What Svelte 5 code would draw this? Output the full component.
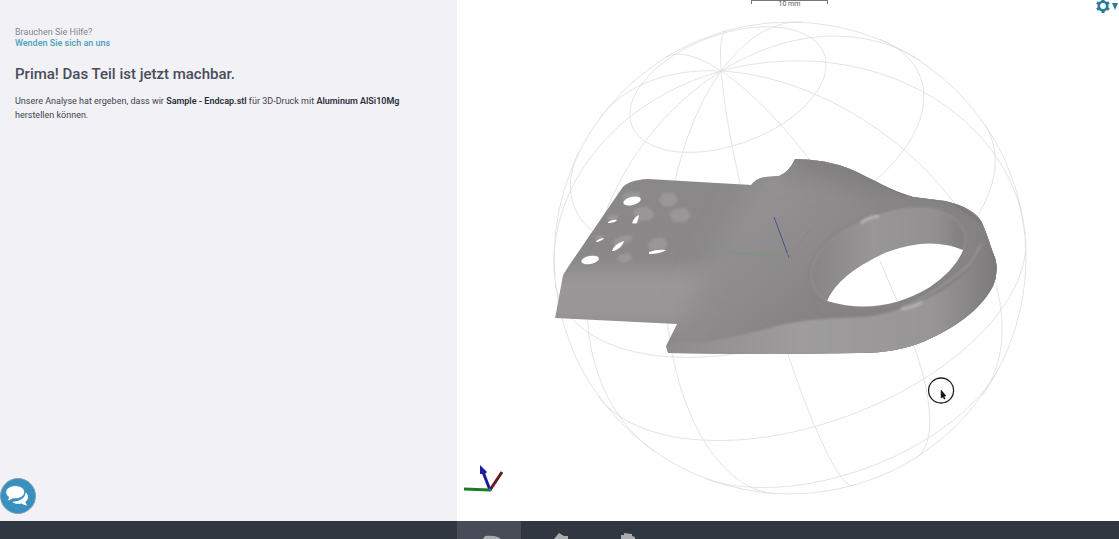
<script lang="ts">
	type Point = { x: number; y: number; z: number };

	// Bounding sphere of the orbit control, in scene units
	const center = { x: 790, y: 258 };
	const radius = 236;
	const rings = 7;
	const segments = 12;
	const twist = 98.7;

	// Pole axis and the two vectors that span the equator
	const axis = { x: -0.292, y: -0.792, z: 0.537 };
	const u = { x: 0.94, y: -0.347, z: 0 };
	const v = { x: 0.186, y: 0.505, z: 0.843 };

	const rad = (deg: number) => (deg * Math.PI) / 180;

	function project(theta: number, phi: number): Point {
		const c = Math.cos(theta);
		const s = Math.sin(theta);
		const a = s * Math.cos(phi);
		const b = s * Math.sin(phi);
		return {
			x: center.x + radius * (c * axis.x + a * u.x + b * v.x),
			y: center.y + radius * (c * axis.y + a * u.y + b * v.y),
			z: c * axis.z + a * u.z + b * v.z
		};
	}

	// Only the side that faces the camera is drawn
	function toPath(points: Point[]): string {
		let d = '';
		let pen = false;
		for (const p of points) {
			if (p.z < 0) {
				pen = false;
				continue;
			}
			d += `${pen ? 'L' : 'M'}${p.x.toFixed(1)} ${p.y.toFixed(1)}`;
			pen = true;
		}
		return d;
	}

	const steps = Array.from({ length: 121 }, (_, i) => i / 120);

	const parallels = Array.from({ length: rings - 1 }, (_, i) =>
		toPath(steps.map((t) => project(rad(((i + 1) * 180) / rings), rad(t * 360))))
	);
	const meridians = Array.from({ length: segments }, (_, i) =>
		toPath(steps.map((t) => project(rad(t * 180), rad(twist + (i * 360) / segments))))
	);

	const thumbs = [
		{ label: 'Ansicht 1', d: 'M26 18 L28 15 Q35 14 41 16 L44 18 Z' },
		{ label: 'Ansicht 2', d: 'M29 18 L34 12 L39 15 L43 15 V18 H29 Z' },
		{ label: 'Ansicht 3', d: 'M28 18 V14 L31 14 L31 12 L39 13 L39 15 L42 16 V18 H28 Z' }
	];
	let selected = $state(0);
</script>

<div class="page">
	<main>
		<section class="info">
			<p class="help">
				Brauchen Sie Hilfe?<br />
				<a href="#kontakt">Wenden Sie sich an uns</a>
			</p>
			<h1>Prima! Das Teil ist jetzt machbar.</h1>
			<p class="result">
				Unsere Analyse hat ergeben, dass wir <strong>Sample - Endcap.stl</strong> für 3D-Druck mit
				<strong>Aluminum AlSi10Mg</strong><br />herstellen können.
			</p>
			<button class="chat" aria-label="Chat">
				<svg viewBox="0 0 36 36">
					<path
						d="M26 14 C30 17 29 22 26 24 C26 26 27 27 28 28 C25 28 23 27 22 26 C18 27 14 26 12 24 C20 24 26 20 26 14 Z"
						fill="#fff"
					/>
					<path
						d="M15 7 C21 7 25 10 25 14 C25 18 20 21 15 21 L12 21 C10 23 8 23 6 23 C7 22 8 21 8 19 C6 18 5 16 5 14 C5 10 10 7 15 7 Z"
						fill="#fff"
						stroke="#398fbd"
					/>
				</svg>
			</button>
		</section>

		<section class="viewer">
			<svg class="scene" viewBox="457 0 662 521">
				<defs>
					<linearGradient id="plate" x1="0" y1="180" x2="0" y2="354" gradientUnits="userSpaceOnUse">
						<stop offset="0" stop-color="#8a8888" />
						<stop offset="0.44" stop-color="#898787" />
						<stop offset="0.6" stop-color="#9a9898" />
						<stop offset="0.75" stop-color="#989696" />
						<stop offset="1" stop-color="#858383" />
					</linearGradient>
					<linearGradient id="hub" x1="730" y1="220" x2="815" y2="320" gradientUnits="userSpaceOnUse">
						<stop offset="0" stop-color="#939191" />
						<stop offset="0.5" stop-color="#8d8b8b" />
						<stop offset="1" stop-color="#838181" />
					</linearGradient>
					<linearGradient id="side" x1="670" y1="0" x2="996" y2="0" gradientUnits="userSpaceOnUse">
						<stop offset="0" stop-color="#8e8c8c" />
						<stop offset="0.4" stop-color="#9e9c9c" />
						<stop offset="0.8" stop-color="#989696" />
						<stop offset="1" stop-color="#7c7a7a" />
					</linearGradient>
					<linearGradient id="bore" x1="811" y1="0" x2="967" y2="0" gradientUnits="userSpaceOnUse">
						<stop offset="0" stop-color="#868484" />
						<stop offset="0.4" stop-color="#989696" />
						<stop offset="0.8" stop-color="#929090" />
						<stop offset="1" stop-color="#7d7b7b" />
					</linearGradient>
					<filter id="soft" x="-20%" y="-20%" width="140%" height="140%">
						<feGaussianBlur stdDeviation="12" />
					</filter>
					<filter id="edge" x="-20%" y="-20%" width="140%" height="140%">
						<feGaussianBlur stdDeviation="1" />
					</filter>
					<clipPath id="outline">
						<path
							d="M555 318 L563 275 L568 267 L622 188 Q628 180 648 179 L751 185 Q756 178 765 177 L779 176 Q789 172 795 159 Q825 159 850 169 C874 180 892 191 913 197 L945 201 Q972 207 981 221 C986 230 990 246 995 258 Q999 272 993 286 C980 311 954 328 925 341 Q897 353 860 353 L773 354 L668 353 L666 346 L677 324 Z"
						/>
					</clipPath>
				</defs>

				<g class="grid">
					<circle cx={center.x} cy={center.y} r={radius} />
					{#each parallels as d}
						<path {d} />
					{/each}
					{#each meridians as d}
						<path {d} />
					{/each}
				</g>

				<g clip-path="url(#outline)">
					<path d="M540 150 H1010 V370 H540 Z" fill="url(#plate)" />
					<path
						d="M760 172 L800 140 L1030 190 V390 H820 L670 370 Q690 290 712 252 Z"
						fill="url(#hub)"
						filter="url(#soft)"
					/>
					<path
						d="M780 170 Q850 185 880 200 L930 196 L850 145 L795 140 Z"
						fill="#827f80"
						filter="url(#soft)"
					/>
					<path
						d="M850 168 L905 195 L950 200 L985 225 L998 270"
						class="shade"
						filter="url(#edge)"
					/>
					<path
						d="M810 285 Q800 262 834 235 Q872 207 925 203 Q962 206 977 228 Q978 262 940 288 Q890 318 820 312 Z"
						fill="#858383"
						filter="url(#edge)"
					/>
					<path
						d="M668 343 L700 342 Q725 340 780 325 Q810 318 867 317 Q908 310 943 290 Q976 269 988 238 L1005 238 V360 H660 Z"
						fill="url(#side)"
						filter="url(#edge)"
					/>
					<path d="M903 307 Q943 290 971 262 L981 244" class="rim" filter="url(#edge)" />
					<path
						d="M827 301 Q806 290 813 263 Q821 242 850 227 Q896 203 933 209 Q973 220 963 250 Z"
						fill="url(#bore)"
						stroke="#999797"
						filter="url(#edge)"
					/>
					<path d="M861 223 Q868 217 879 216" class="glint" filter="url(#edge)" />
					<path d="M901 309 Q914 307 922 302" class="glint" filter="url(#edge)" />
				</g>

				<path
					d="M827 301 Q838 274 887 252 Q930 236 963 250 Q956 269 930 287 Q880 317 827 301 Z"
					fill="#fff"
				/>
				<path d="M880 261 L897 301" class="through" />

				<g class="holes" filter="url(#edge)">
					<path d="M659 200 L663 193 L674 193 L678 201 L671 207 L662 206 Z" />
					<path d="M633 212 Q637 206 648 207 L655 214 L650 220 L638 221 Z" />
					<path d="M669 214 Q674 207 686 208 L691 216 L685 222 L673 222 Z" />
					<path d="M622 195 Q628 190 640 193 L640 199 L624 201 Z" />
					<path d="M607 217 Q612 212 618 216 L617 221 L609 221 Z" />
					<path d="M595 238 Q598 232 604 236 L603 240 L596 240 Z" />
					<path d="M613 242 Q619 234 632 236 L632 240 L615 248 Z" />
					<path d="M648 244 Q652 237 663 238 L668 243 L665 250 L649 250 Z" />
					<path d="M616 260 Q620 252 631 254 L632 259 L624 263 Z" />
					<path d="M582 260 Q588 252 599 256 L598 262 Z" />
				</g>
				<g fill="#fff">
					<ellipse cx="632" cy="201" rx="9" ry="4" transform="rotate(-14 632 201)" />
					<ellipse cx="590" cy="260" rx="9" ry="4" transform="rotate(-12 590 260)" />
					<path d="M632 223 Q634 217 639 215 L637 223 Q634 224 632 223 Z" />
					<path d="M612 251 Q614 244 624 241 Q622 248 614 251 Z" />
					<path d="M608 222 Q613 219 617 220 Q615 223 608 223 Z" />
					<path d="M596 241 Q600 238 604 238 Q602 241 596 242 Z" />
					<path d="M649 252 Q657 249 666 250 Q660 254 649 254 Z" />
				</g>

				<g fill="none">
					<path d="M789 258 L774 217" stroke="#4c5290" />
					<path d="M789 258 L812 226" stroke="#a27c7c" />
					<path d="M789 258 L708 250 M789 254 H745" stroke="#829380" />
				</g>

				<circle cx="941" cy="390.5" r="12.5" fill="none" stroke="#222" stroke-width="1.3" />
				<path d="M941 390 V398 L943 397 L944 399 L945 399 L944 396 L946 396 Z" fill="#111" stroke="#111" stroke-width="0.5" />
			</svg>

			<div class="scale"><span>10 mm</span></div>

			<button class="settings" aria-label="Einstellungen">
				<svg viewBox="0 0 24 16">
					<circle cx="8" cy="8" r="4.2" fill="none" stroke="#2a7a98" stroke-width="2.6" />
					<path
						d="M8 1 V4 M8 12 V15 M2 4.5 L4.5 6 M11.5 10 L14 11.5 M2 11.5 L4.5 10 M11.5 6 L14 4.5"
						stroke="#2a7a98"
						stroke-width="3"
					/>
					<path d="M17 5 H23 L20 12 Z" fill="#2a7a98" />
				</svg>
			</button>

			<svg class="triad" viewBox="0 0 44 32">
				<path d="M26 27 L38 9" stroke="#631b22" stroke-width="3" />
				<path d="M26 27 L19 9" stroke="#1c1c9c" stroke-width="3" />
				<path d="M16 2 L23 9 L21 11 L16 11 Z" fill="#1c1c9c" />
				<path d="M0 26 L26 27" stroke="#1e7a26" stroke-width="3" />
				<circle cx="26" cy="27" r="1.5" fill="#2a6f9a" />
			</svg>
		</section>
	</main>

	<footer>
		<nav>
			{#each thumbs as thumb, i}
				<button
					class="thumb"
					class:selected={selected === i}
					aria-label={thumb.label}
					onclick={() => (selected = i)}
				>
					<svg viewBox="0 0 64 18"><path d={thumb.d} fill="#a9abaf" /></svg>
				</button>
			{/each}
		</nav>
	</footer>
</div>

<style>
	:global(body) {
		margin: 0;
	}

	.page {
		display: flex;
		flex-direction: column;
		height: 100vh;
		overflow: hidden;
		font-family: Roboto, 'Liberation Sans', sans-serif;
		color: #3f434f;
	}

	main,
	footer {
		display: grid;
		grid-template-columns: 69fr 100fr;
	}

	main {
		flex: 1;
		min-height: 0;
	}

	button {
		padding: 0;
		border: none;
		background: none;
		cursor: pointer;
	}

	svg {
		display: block;
	}

	.info {
		position: relative;
		padding: 27px 16px 0 15px;
		background: #f1f1f6;
	}

	p,
	h1 {
		margin: 0;
	}

	.help {
		font-size: 9px;
		line-height: 11px;
		color: #85868d;
	}

	.help a {
		font-weight: 500;
		color: #4aa0ba;
		text-decoration: none;
	}

	h1 {
		margin-top: 15px;
		font-size: 15px;
		line-height: 20px;
		font-weight: 500;
		color: #4a4c58;
	}

	.result {
		margin-top: 10px;
		font-size: 9px;
		line-height: 14px;
	}

	.result strong {
		font-weight: 600;
		color: #2b2e38;
	}

	.chat {
		position: absolute;
		left: 0;
		bottom: 7px;
		width: 36px;
		height: 36px;
		border: 1px solid #7f9db0;
		border-radius: 50%;
		background: #398fbd;
	}

	.viewer {
		position: relative;
		min-height: 0;
		background: #fff;
	}

	.scene {
		width: 100%;
		height: 100%;
	}

	.grid {
		fill: none;
		stroke: #dcdcdc;
		stroke-width: 0.8;
	}

	.through {
		fill: none;
		stroke: #e2e2e2;
	}

	.shade {
		fill: none;
		stroke: #777575;
		stroke-width: 2;
	}

	.rim {
		fill: none;
		stroke: #969494;
		stroke-width: 2;
	}

	.glint {
		fill: none;
		stroke: #b4b2b2;
		stroke-width: 3;
	}

	.holes {
		fill: #999797;
	}

	.scale {
		position: absolute;
		top: 0;
		left: 50%;
		box-sizing: border-box;
		width: 77px;
		height: 4px;
		margin-left: -37px;
		border: 1px solid #777;
		border-top: none;
		border-bottom: none;
		font-size: 7px;
		line-height: 6px;
		text-align: center;
		color: #555;
	}

	.scale span {
		display: block;
		border-top: 1px solid #777;
	}

	.settings {
		position: absolute;
		top: -2px;
		right: 0;
		width: 24px;
		height: 16px;
	}

	.triad {
		position: absolute;
		left: 7px;
		bottom: 26px;
		width: 44px;
		height: 32px;
	}

	footer {
		background: #303741;
	}

	nav {
		display: flex;
		grid-column: 2;
		gap: 4px;
	}

	.thumb {
		width: 64px;
		height: 18px;
	}

	.thumb.selected {
		background: #474c58;
	}
</style>
